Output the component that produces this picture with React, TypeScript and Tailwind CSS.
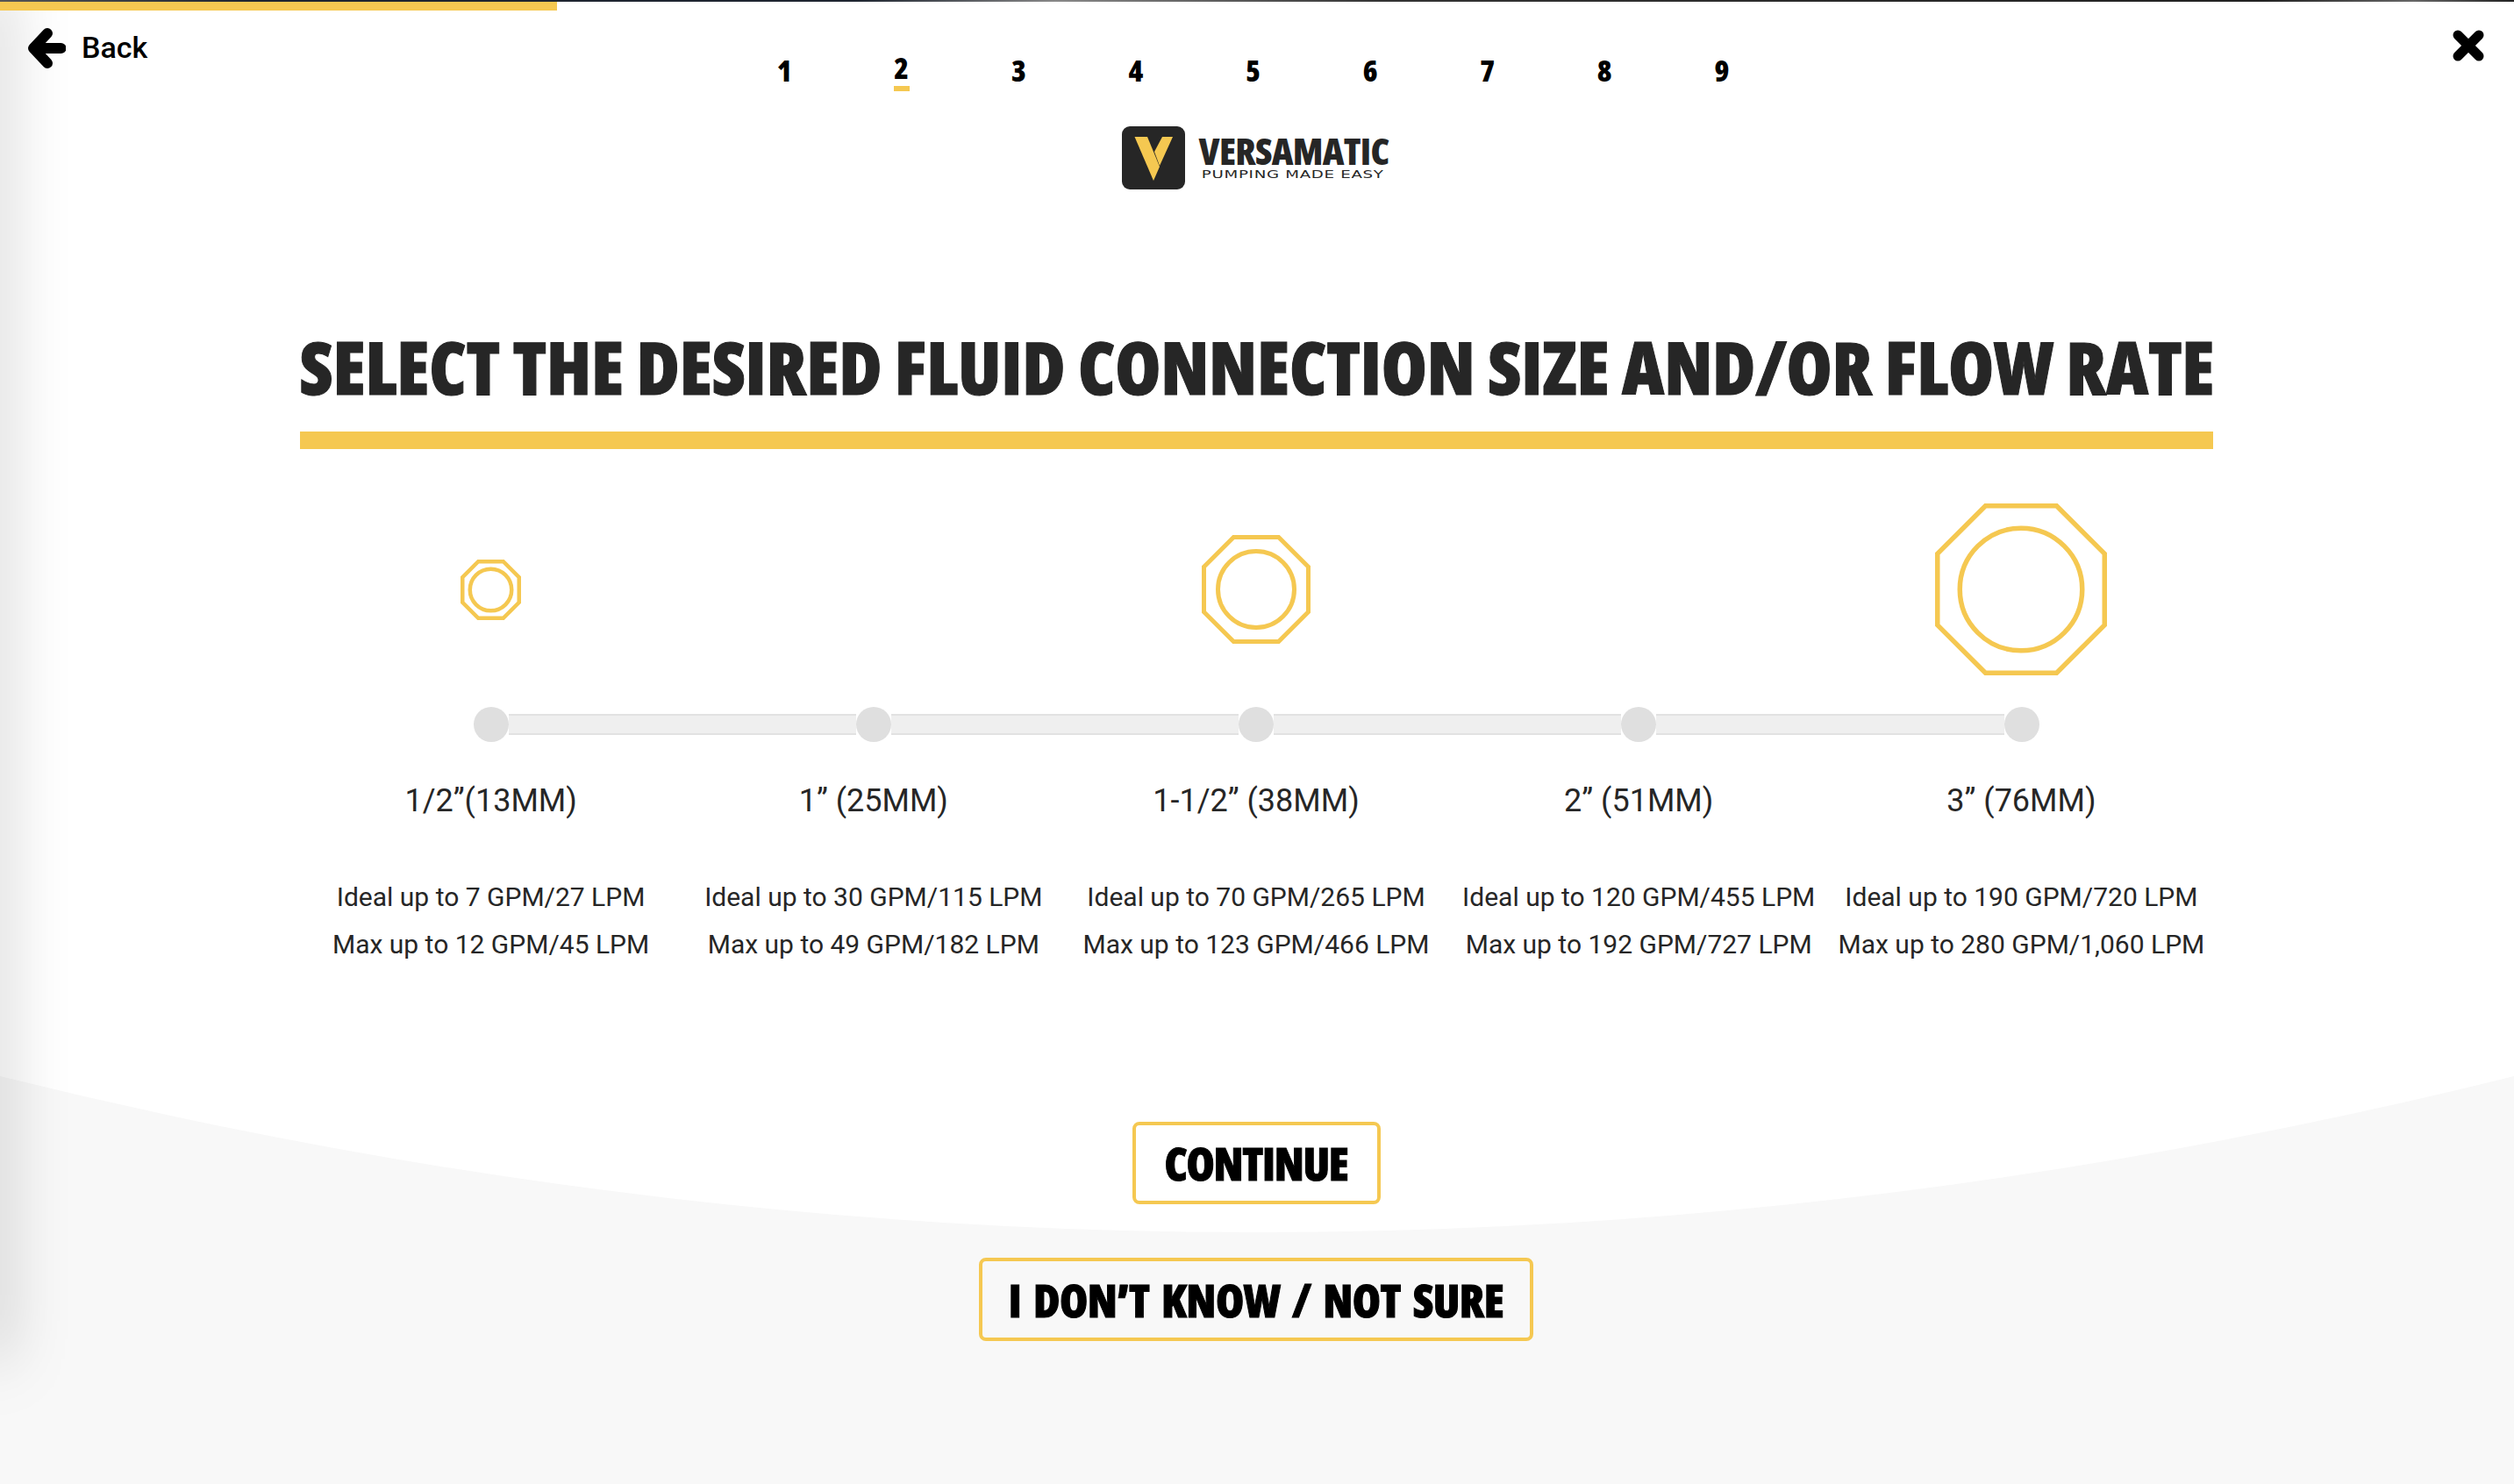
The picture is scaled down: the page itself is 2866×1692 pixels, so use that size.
const steps = ["1", "2", "3", "4", "5", "6", "7", "8", "9"]

const sizes = [
  { label: "1/2”(13MM)", ideal: "Ideal up to 7 GPM/27 LPM", max: "Max up to 12 GPM/45 LPM", outer: 69, inner: 52, stroke: 4.5 },
  { label: "1” (25MM)", ideal: "Ideal up to 30 GPM/115 LPM", max: "Max up to 49 GPM/182 LPM", outer: 0, inner: 0, stroke: 0 },
  { label: "1-1/2” (38MM)", ideal: "Ideal up to 70 GPM/265 LPM", max: "Max up to 123 GPM/466 LPM", outer: 124, inner: 92, stroke: 5 },
  { label: "2” (51MM)", ideal: "Ideal up to 120 GPM/455 LPM", max: "Max up to 192 GPM/727 LPM", outer: 0, inner: 0, stroke: 0 },
  { label: "3” (76MM)", ideal: "Ideal up to 190 GPM/720 LPM", max: "Max up to 280 GPM/1,060 LPM", outer: 196, inner: 145, stroke: 5.5 },
]

const Octagon = ({ outer, inner, stroke }: { outer: number; inner: number; stroke: number }) => {
  if (!outer) return null
  const a = stroke / 2
  const b = outer - stroke / 2
  const c = outer * 0.293
  const d = outer * 0.707
  return (
    <svg width={outer} height={outer} viewBox={`0 0 ${outer} ${outer}`} fill="none" stroke="#f5c851" strokeWidth={stroke}>
      <polygon points={`${c},${a} ${d},${a} ${b},${c} ${b},${d} ${d},${b} ${c},${b} ${a},${d} ${a},${c}`} />
      <circle cx={outer / 2} cy={outer / 2} r={inner / 2 - stroke / 2} />
    </svg>
  )
}

const Logo = () => (
  <div className="flex items-center gap-4 h-[72px] mr-[9px]">
    <svg width="72" height="72" viewBox="0 0 72 72">
      <rect width="72" height="72" rx="9" fill="#262626" />
      <polygon points="14.5,12 29,12 43,46 36,62" fill="#f5c851" />
      <polygon points="46,12 58,12 43,45 37,29" fill="#f5c851" />
    </svg>
    <div className="flex flex-col items-start w-[212px]">
      <div className="text-[43px] leading-[34px] h-[34px] font-extrabold text-[#262626] font-['Open_Sans',sans-serif] [font-stretch:75%] tracking-[-0.7px] whitespace-nowrap">
        VERSAMATIC
      </div>
      <div className="text-[13px] leading-[14px] mt-[3px] pl-[2px] origin-left scale-x-[1.4] text-[#262626] font-['DejaVu_Sans',sans-serif] tracking-[0.5px] whitespace-nowrap">
        PUMPING MADE EASY
      </div>
    </div>
  </div>
)

export default function App() {
  return (
    <div className="relative w-[2866px] h-[1692px] overflow-hidden bg-white flex flex-col items-center">
      <svg className="absolute inset-0" width="2866" height="1692" viewBox="0 0 2866 1692">
        <path d="M0 1227 Q1433 1583 2866 1227 V1692 H0 Z" fill="#f8f8f8" />
      </svg>
      <div className="absolute left-[-20px] top-[-20px] w-[20px] h-[1570px] shadow-[0_0_70px_rgba(0,0,0,0.36)]" />

      <div className="relative w-full h-[2px] bg-[linear-gradient(90deg,#555_0%,#1e2530_10%,#1e2530_34%,#888_42%,#333_55%,#222_90%,#666_96%,#222_100%)]" />
      <div className="relative self-start w-[635px] h-[10px] bg-[#f5c851]" />

      <div className="absolute left-[31px] top-[29px] flex items-center gap-[18px]">
        <svg width="44" height="46" viewBox="0 0 44 46" fill="none" stroke="#000" strokeWidth="12" strokeLinecap="round" strokeLinejoin="round">
          <polyline points="23,6 7,23 23,40" />
          <line x1="8" y1="23" x2="38.5" y2="23" />
        </svg>
        <span className="text-[34px] font-medium text-black font-['Roboto',sans-serif]">Back</span>
      </div>

      <svg className="absolute left-[2796px] top-[34px]" width="36" height="36" viewBox="0 0 36 36" fill="none" stroke="#000" strokeWidth="11" strokeLinecap="round">
        <line x1="6" y1="6" x2="30" y2="30" />
        <line x1="30" y1="6" x2="6" y2="30" />
      </svg>

      <div className="relative flex mt-[48px] mr-[9px]">
        {steps.map((s) => (
          <div key={s} className="w-[133.6px] flex flex-col items-center h-[48px]">
            <span className={`text-[34px] leading-[40px] font-extrabold text-black font-['Open_Sans',sans-serif] [font-stretch:75%] ${s === "2" ? "-mt-[3px]" : ""}`}>
              {s}
            </span>
            {s === "2" && <div className="w-[18px] h-[6px] bg-[#f5c851] mt-[1px]" />}
          </div>
        ))}
      </div>

      <div className="relative mt-[36px]">
        <Logo />
      </div>

      <div className="relative w-[2181px] mt-[152px] mr-[2px]">
        <h1 className="text-[84px] leading-[100px] h-[100px] font-extrabold text-center text-[#262626] font-['Open_Sans',sans-serif] [font-stretch:75%] tracking-[-0.2px] [-webkit-text-stroke:1px_#262626] whitespace-nowrap">
          SELECT THE DESIRED FLUID CONNECTION SIZE AND/OR FLOW RATE
        </h1>
        <div className="h-[20px] bg-[#f5c851] mt-[24px]" />

        <div className="grid grid-cols-5 h-[196px] mt-[62px]">
          {sizes.map((c) => (
            <div key={c.label} className="flex items-center justify-center">
              <Octagon outer={c.outer} inner={c.inner} stroke={c.stroke} />
            </div>
          ))}
        </div>

        <div className="flex items-center px-[198px] mt-[36px] h-[40px]">
          {sizes.map((c, i) => (
            <div key={c.label} className={`flex items-center ${i < 4 ? "flex-1" : ""}`}>
              <div className="w-[40px] h-[40px] rounded-full bg-[#dfdfdf] shrink-0" />
              {i < 4 && <div className="flex-1 h-[24px] bg-[#efefef] border-y-2 border-[#e2e2e2]" />}
            </div>
          ))}
        </div>

        <div className="grid grid-cols-5 mt-[42px] text-[#262626] font-['Roboto',sans-serif] text-center">
          {sizes.map((c) => (
            <div key={c.label} className="flex flex-col items-center whitespace-nowrap">
              <div className="text-[36px] leading-[50px]">{c.label}</div>
              <div className="text-[30px] leading-[54px] mt-[58px]">{c.ideal}</div>
              <div className="text-[30px] leading-[54px]">{c.max}</div>
            </div>
          ))}
        </div>
      </div>

      <div className="relative flex flex-col items-center mt-[175px] mr-[2px] gap-[61px] font-['Open_Sans',sans-serif] [font-stretch:75%] font-extrabold text-black">
        <button className="w-[283px] h-[94px] rounded-[8px] border-4 border-[#f5c851] text-[52px] leading-none tracking-[-1.3px] [-webkit-text-stroke:1px_#000]">CONTINUE</button>
        <button className="w-[632px] h-[95px] rounded-[8px] border-4 border-[#f5c851] text-[52px] leading-none tracking-[-0.5px] [word-spacing:5px] [-webkit-text-stroke:1px_#000] whitespace-nowrap">I DON’T KNOW / NOT SURE</button>
      </div>
    </div>
  )
}
